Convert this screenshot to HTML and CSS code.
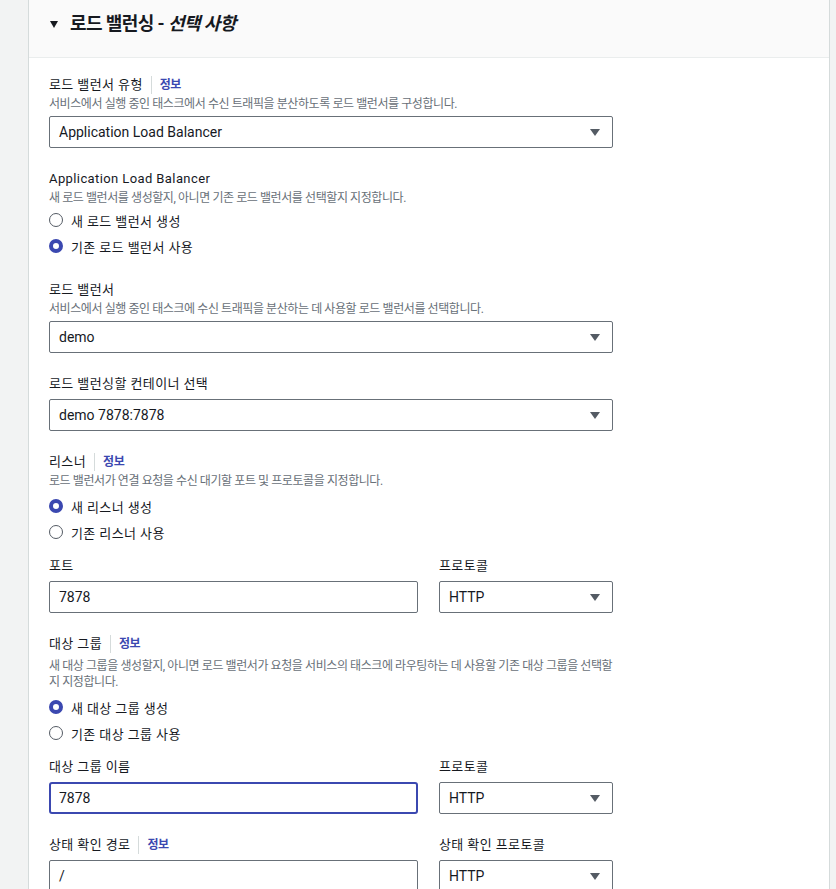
FILE: index.html
```html
<!DOCTYPE html>
<html lang="ko">

<head>
    <meta charset="UTF-8">
    <meta name="viewport" content="width=device-width, initial-scale=1.0">
    <title>로드 밸런싱</title>
    <link rel="stylesheet" href="styles.css">
</head>

<body>
    <div class="panel">
        <!-- Section header -->
        <div class="panel-header">
            <span class="toggle"></span>
            <h2>로드 밸런싱 - <em>선택 사항</em></h2>
        </div>

        <div class="panel-body">
            <!-- Load balancer type -->
            <div class="field">
                <div class="label">로드 밸런서 유형 <a class="info" href="#">정보</a></div>
                <div class="desc">서비스에서 실행 중인 태스크에서 수신 트래픽을 분산하도록 로드 밸런서를 구성합니다.</div>
                <div class="select"><span>Application Load Balancer</span><span class="caret"></span></div>
            </div>

            <div class="field">
                <div class="label">Application Load Balancer</div>
                <div class="desc">새 로드 밸런서를 생성할지, 아니면 기존 로드 밸런서를 선택할지 지정합니다.</div>
                <div class="radios">
                    <div class="radio"><span class="dot"></span>새 로드 밸런서 생성</div>
                    <div class="radio"><span class="dot checked"></span>기존 로드 밸런서 사용</div>
                </div>
            </div>

            <div class="field">
                <div class="label">로드 밸런서</div>
                <div class="desc">서비스에서 실행 중인 태스크에 수신 트래픽을 분산하는 데 사용할 로드 밸런서를 선택합니다.</div>
                <div class="select"><span>demo</span><span class="caret"></span></div>
            </div>

            <div class="field">
                <div class="label">로드 밸런싱할 컨테이너 선택</div>
                <div class="select"><span>demo 7878:7878</span><span class="caret"></span></div>
            </div>

            <!-- Listener -->
            <div class="field">
                <div class="label">리스너 <a class="info" href="#">정보</a></div>
                <div class="desc">로드 밸런서가 연결 요청을 수신 대기할 포트 및 프로토콜을 지정합니다.</div>
                <div class="radios spaced">
                    <div class="radio"><span class="dot checked"></span>새 리스너 생성</div>
                    <div class="radio"><span class="dot"></span>기존 리스너 사용</div>
                </div>
                <div class="columns">
                    <div>
                        <div class="label">포트</div>
                        <div class="input">7878</div>
                    </div>
                    <div>
                        <div class="label">프로토콜</div>
                        <div class="select"><span>HTTP</span><span class="caret"></span></div>
                    </div>
                </div>
            </div>

            <!-- Target group -->
            <div class="field">
                <div class="label">대상 그룹 <a class="info" href="#">정보</a></div>
                <div class="desc long">새 대상 그룹을 생성할지, 아니면 로드 밸런서가 요청을 서비스의 태스크에 라우팅하는 데 사용할 기존 대상 그룹을 선택할지 지정합니다.</div>
                <div class="radios spaced">
                    <div class="radio"><span class="dot checked"></span>새 대상 그룹 생성</div>
                    <div class="radio"><span class="dot"></span>기존 대상 그룹 사용</div>
                </div>
                <div class="columns">
                    <div>
                        <div class="label">대상 그룹 이름</div>
                        <div class="input focused">7878</div>
                    </div>
                    <div>
                        <div class="label">프로토콜</div>
                        <div class="select"><span>HTTP</span><span class="caret"></span></div>
                    </div>
                    <div>
                        <div class="label">상태 확인 경로 <a class="info" href="#">정보</a></div>
                        <div class="input">/</div>
                    </div>
                    <div>
                        <div class="label">상태 확인 프로토콜</div>
                        <div class="select"><span>HTTP</span><span class="caret"></span></div>
                    </div>
                </div>
            </div>
        </div>
    </div>
</body>

</html>
```

FILE: styles.css
```css
body {
    margin: 0;
    padding: 0;
    background-color: #f2f3f3;
    color: #16191f;
    font-family: Roboto, "Noto Sans CJK KR", sans-serif;
    height: 889px;
    overflow: hidden;
}

.panel {
    margin-left: 28px;
    width: 800px;
    min-height: 889px;
    background-color: #fff;
    border-left: 1px solid #d5dbdb;
    border-right: 1px solid #d5dbdb;
}

.panel-header {
    display: flex;
    align-items: flex-start;
    box-sizing: border-box;
    height: 58px;
    padding: 13px 0 0 21px;
    background-color: #fafafa;
    border-bottom: 1px solid #eaeded;
}

.toggle {
    width: 0;
    height: 0;
    margin-top: 8px;
    margin-right: 12px;
    border-left: 4px solid transparent;
    border-right: 4px solid transparent;
    border-top: 7px solid #16191f;
}

.panel-header h2 {
    margin: 0;
    font-size: 18px;
    line-height: 22px;
    font-weight: bold;
    letter-spacing: -0.6px;
}

.panel-header em {
    font-style: italic;
}

.panel-body {
    padding: 16px 20px 0 20px;
    width: 564px;
}

.field + .field {
    margin-top: 20px;
}

.label {
    display: flex;
    align-items: center;
    font-size: 13px;
    line-height: 22px;
    letter-spacing: 0.4px;
}

.info {
    font-size: 12px;
    font-weight: bold;
    color: #3b48b0;
    text-decoration: none;
    margin-left: 8px;
    padding-left: 8px;
    border-left: 1px solid #d5dbdb;
    line-height: 18px;
    letter-spacing: -0.5px;
}

.desc {
    font-size: 12px;
    line-height: 16px;
    color: #687078;
    letter-spacing: -0.42px;
}

.desc.long {
    padding-top: 3px;
}

.select,
.input {
    display: flex;
    align-items: center;
    justify-content: space-between;
    box-sizing: border-box;
    height: 32px;
    margin-top: 4px;
    padding: 0 12px 0 9px;
    border: 1px solid #687078;
    border-radius: 2px;
    font-size: 14px;
}

.input.focused {
    border: 2px solid #3b48b0;
    padding-left: 8px;
    border-radius: 3px;
}

.caret {
    width: 0;
    height: 0;
    border-left: 5px solid transparent;
    border-right: 5px solid transparent;
    border-top: 7px solid #545b64;
}

.radios {
    margin-top: 1px;
}

.radios.spaced {
    margin-top: 4px;
}

.radio {
    display: flex;
    align-items: center;
    height: 26px;
    font-size: 13px;
    letter-spacing: 0.4px;
}

.dot {
    box-sizing: border-box;
    width: 14px;
    height: 14px;
    margin-right: 8px;
    border: 1.5px solid #545b64;
    border-radius: 50%;
}

.dot.checked {
    border: 4px solid #3b48b0;
}

.columns {
    display: grid;
    grid-template-columns: 369px 174px;
    column-gap: 21px;
    row-gap: 20px;
    margin-top: 10px;
}
```
